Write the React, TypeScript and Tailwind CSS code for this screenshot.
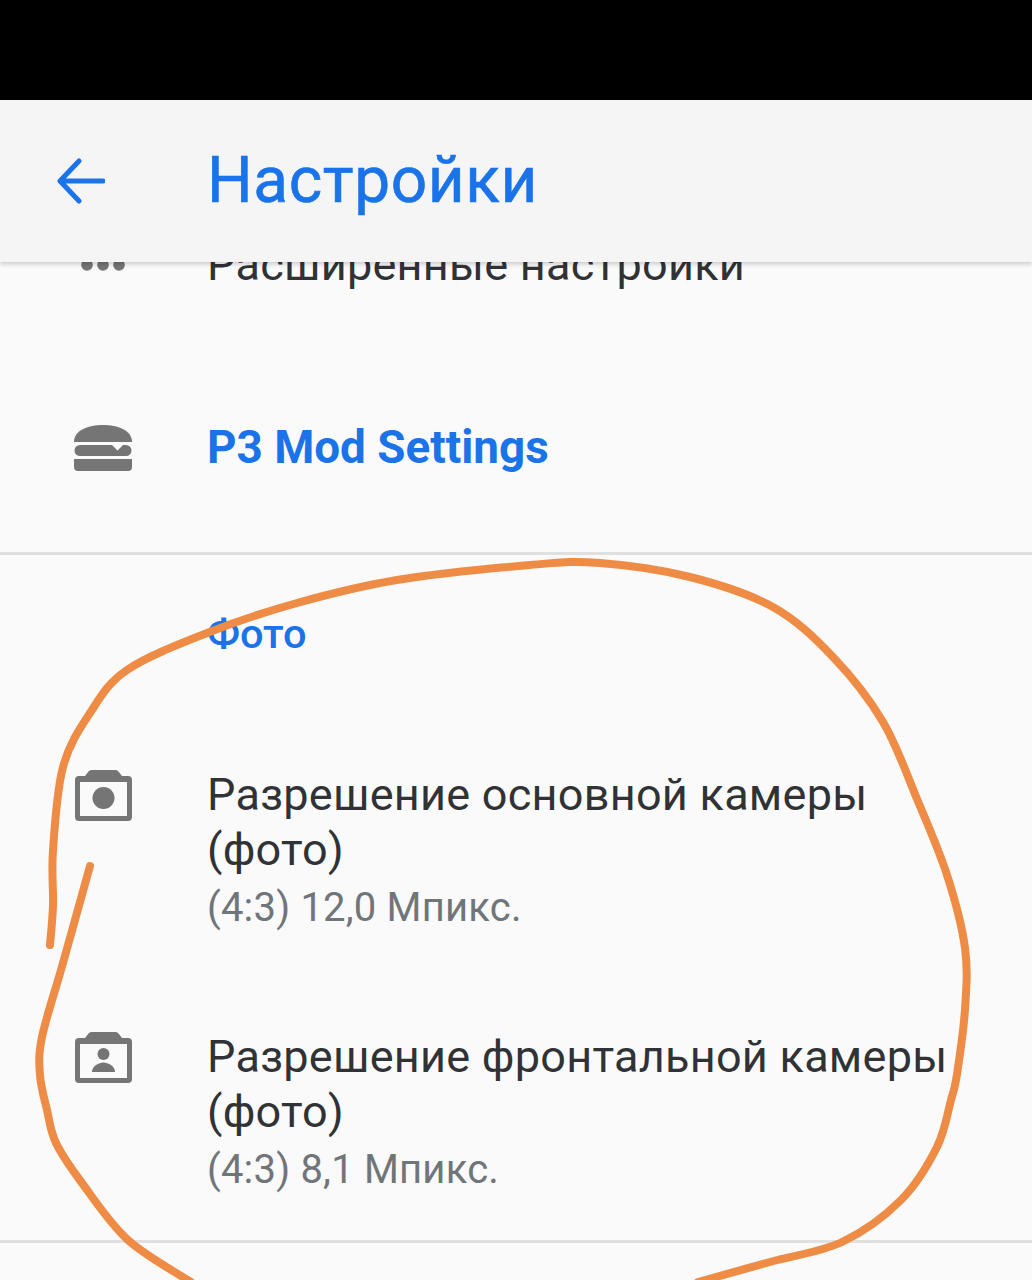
import React from "react";

const Icon = ({ children, className = "" }: { children: React.ReactNode; className?: string }) => (
  <div className={`w-[207px] shrink-0 pl-[74px] ${className}`}>{children}</div>
);

function Row({ icon, title, sub, last }: { icon: React.ReactNode; title: string; sub: string; last?: boolean }) {
  return (
    <div className={`flex ${last ? "pb-[41px]" : "pb-[92px]"}`}>
      <Icon className="pt-[3px] pl-[75px]">{icon}</Icon>
      <div>
        <div className="text-[45px] leading-[55px] text-[#303236] tracking-[0.27px]">{title}<br />(фото)</div>
        <div className="mt-[2px] text-[40px] leading-[58px] text-[#70757a] tracking-[0.2px]">{sub}</div>
      </div>
    </div>
  );
}

const frame = "M17 0h23c1.500 0 2.500.5 3.500 1.500L47 6h6a4 4 0 0 1 4 4v37a4 4 0 0 1-4 4H4a4 4 0 0 1-4-4V10a4 4 0 0 1 4-4h6l3.500-4.500C14.500.5 15.500 0 17 0z";

function smooth(p: number[][]) {
  let d = `M${p[0][0]} ${p[0][1]}`;
  for (let i = 0; i < p.length - 1; i++) {
    const a = p[Math.max(i - 1, 0)];
    const b = p[i];
    const c = p[i + 1];
    const e = p[Math.min(i + 2, p.length - 1)];
    d += `C${b[0] + (c[0] - a[0]) / 6} ${b[1] + (c[1] - a[1]) / 6} ${c[0] - (e[0] - b[0]) / 6} ${c[1] - (e[1] - b[1]) / 6} ${c[0]} ${c[1]}`;
  }
  return d;
}

const stroke1 = [[50,945],[53,905],[53,850],[63,767],[90,713],[127,670],[207,633],[297,603],[397,580],[530,565],[600,563],[690,577],[773,607],[833,657],[883,722],[917,799],[947,875],[965,948],[965,1009],[957,1074],[951,1100],[937,1147],[901,1200],[842,1242],[770,1262],[698,1282]];
const stroke2 = [[90,866],[63,963],[42,1037],[40,1075],[47,1110],[56,1143],[82,1183],[128,1240],[191,1282]];

export default function App() {
  return (
    <div className="relative w-[1032px] h-[1280px] overflow-hidden bg-[#fafafa] font-['Roboto',sans-serif]">
      <div className="h-[100px] bg-black" />
      <header className="relative z-10 flex h-[162px] items-center bg-[#f5f5f5] shadow-[0_2px_5px_rgba(0,0,0,0.2)]">
        <div className="w-[207px] shrink-0 pl-[57px]">
          <svg width="48" height="48" viewBox="0 0 48 48" fill="none" stroke="#1a73e8" strokeWidth="5" strokeLinecap="round" strokeLinejoin="round">
            <path d="M46 24H4M22 4L3 24l19 20" />
          </svg>
        </div>
        <h1 className="text-[64px] leading-none font-normal text-[#1a73e8] tracking-[0.6px] [-webkit-text-stroke:0.6px_#1a73e8]">Настройки</h1>
      </header>

      <main className="-mt-[24px]">
        <div className="flex h-[54px] items-center">
          <Icon>
            <svg width="58" height="16" viewBox="0 0 58 16" fill="#757575">
              <circle cx="13" cy="8" r="5.800" />
              <circle cx="29" cy="8" r="5.800" />
              <circle cx="45" cy="8" r="5.800" />
            </svg>
          </Icon>
          <span className="text-[45px] text-[#303236] tracking-[0.27px]">Расширенные настройки</span>
        </div>

        <div className="flex items-center h-[54px] mt-[129px]">
          <Icon>
            <svg width="58" height="46" viewBox="0 0 58 46" fill="#757575" className="block">
              <path d="M0 16C1 5 14 0 29 0s28 5 29 16v1H0z" />
              <path d="M6 20H38l5.500 5.500L49 20h3a5.500 5.500 0 0 1 0 11H6a5.500 5.500 0 0 1 0-11z" />
              <path d="M0 34h58v8a4 4 0 0 1-4 4H4a4 4 0 0 1-4-4z" />
            </svg>
          </Icon>
          <span className="text-[45.800px] font-bold text-[#1a73e8]">P3 Mod Settings</span>
        </div>

        <div className="mt-[77px] h-[3px] bg-[#e0e0e0]" />

        <div className="pl-[207px] pt-[56px] pb-[110px] text-[41.500px] leading-[46px] font-medium text-[#1a73e8]">Фото</div>

        <Row
          title="Разрешение основной камеры"
          sub="(4:3) 12,0 Мпикс."
          icon={
            <svg width="57" height="51" viewBox="0 0 57 51" className="block">
              <path d={frame} fill="#757575" />
              <rect x="5" y="12" width="47" height="34" fill="#fafafa" />
              <circle cx="28.500" cy="28" r="11" fill="#757575" />
            </svg>
          }
        />
        <Row
          last
          title="Разрешение фронтальной камеры"
          sub="(4:3) 8,1 Мпикс."
          icon={
            <svg width="57" height="51" viewBox="0 0 57 51" className="block">
              <path d={frame} fill="#757575" />
              <rect x="5" y="12" width="47" height="34" fill="#fafafa" />
              <circle cx="28.500" cy="22" r="6" fill="#757575" />
              <path d="M17 40c0-6 7-9.500 11.500-9.500S40 34 40 40z" fill="#757575" />
            </svg>
          }
        />
        <div className="h-[3px] bg-[#e0e0e0]" />
      </main>

      <svg className="absolute left-0 top-0 z-20 pointer-events-none" width="1032" height="1280" viewBox="0 0 1032 1280" fill="none" stroke="#ee8c46" strokeWidth="8" strokeLinecap="round" strokeLinejoin="round">
        <path d={smooth(stroke1)} />
        <path d={smooth(stroke2)} />
      </svg>
    </div>
  );
}
